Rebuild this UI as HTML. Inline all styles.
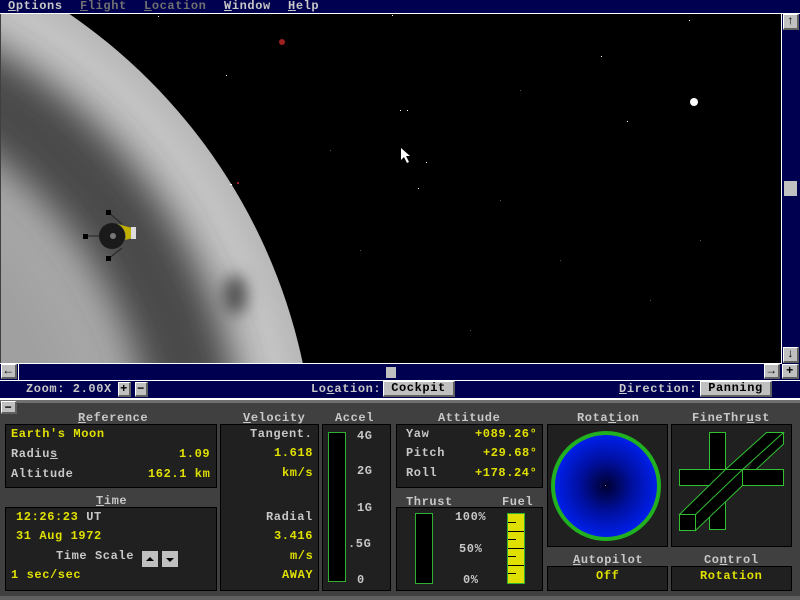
<!DOCTYPE html>
<html><head><meta charset="utf-8"><style>
*{margin:0;padding:0;box-sizing:border-box}
html,body{width:800px;height:600px;overflow:hidden}
body{background:#404040;position:relative;font-family:"Liberation Mono",monospace;font-weight:bold;font-size:12px;letter-spacing:0.6px}
.a{position:absolute;white-space:nowrap;line-height:12px}
.nv{background:#000050}
.box{position:absolute;background:#202020;border:1px solid #000}
.y{color:#e0e000}.g{color:#c8c8c8}
.btn{position:absolute;background:#c0c0c0;border-top:1px solid #fff;border-left:1px solid #fff;border-right:2px solid #606060;border-bottom:2px solid #606060;color:#000;text-align:center;line-height:12px}
u{text-decoration:underline}
</style></head><body>
<div class="a nv" style="left:0;top:0;width:800px;height:13px"></div>
<div class="a g" style="left:8px;top:0"><u>O</u>ptions</div>
<div class="a" style="left:80px;top:0;color:#707070"><u>F</u>light</div>
<div class="a" style="left:144px;top:0;color:#707070"><u>L</u>ocation</div>
<div class="a g" style="left:224px;top:0"><u>W</u>indow</div>
<div class="a g" style="left:288px;top:0"><u>H</u>elp</div>
<div class="a" style="left:0;top:13px;width:800px;height:1px;background:#fff"></div>
<svg class="a" style="left:1px;top:14px" width="780" height="350" viewBox="1 14 780 350">
<defs>
<radialGradient id="m" cx="-250" cy="480" r="565" gradientUnits="userSpaceOnUse">
<stop offset="0.55" stop-color="#a0a0a0"/><stop offset="0.85" stop-color="#b4b4b4"/><stop offset="0.95" stop-color="#c4c4c4"/><stop offset="1" stop-color="#b8b8b8"/></radialGradient>
<filter id="bl" x="-50%" y="-50%" width="200%" height="200%"><feGaussianBlur stdDeviation="18"/></filter>
<filter id="bl2" x="-200%" y="-200%" width="500%" height="500%"><feGaussianBlur stdDeviation="8"/></filter>
<clipPath id="c"><circle cx="-250" cy="480" r="565"/></clipPath>
</defs>
<rect x="1" y="14" width="780" height="350" fill="#000"/>
<circle cx="-250" cy="480" r="565" fill="url(#m)"/>
<g clip-path="url(#c)">
<circle cx="-250" cy="480" r="450" fill="none" stroke="#4a4a4a" stroke-width="90" filter="url(#bl)"/>
<ellipse cx="235" cy="295" rx="12" ry="20" fill="#505050" filter="url(#bl2)"/>
</g>
<g fill="#fff"><circle cx="694" cy="102" r="4"/><rect x="226" y="75" width="1" height="1"/><rect x="400" y="110" width="1" height="1"/><rect x="601" y="56" width="1" height="1"/><rect x="689" y="20" width="1" height="1"/><rect x="407" y="110" width="1" height="1"/><rect x="627" y="121" width="1" height="1"/><rect x="426" y="162" width="1" height="1"/><rect x="418" y="188" width="1" height="1"/><rect x="230" y="184" width="2" height="1"/><rect x="158" y="16" width="1" height="1"/><rect x="392" y="15" width="1" height="1"/></g>
<g fill="#555"><rect x="500" y="200" width="1" height="1"/><rect x="560" y="260" width="1" height="1"/><rect x="650" y="300" width="1" height="1"/><rect x="470" y="330" width="1" height="1"/><rect x="700" y="240" width="1" height="1"/><rect x="330" y="150" width="1" height="1"/><rect x="360" y="250" width="1" height="1"/><rect x="520" y="90" width="1" height="1"/></g>
<circle cx="282" cy="42" r="3" fill="#a02020"/><rect x="237" y="182" width="2" height="2" fill="#a02020"/>
<path d="M401 148 L401 160 L404 157 L407 163 L409 162 L406 156 L410 156 Z" fill="#fff"/>
<g stroke="#222" stroke-width="1" fill="none"><path d="M108 212 L122 224 M85 236 L100 236 M108 259 L122 248"/></g>
<circle cx="112" cy="236" r="13" fill="#1a1a1a"/>
<path d="M117 224 A13 13 0 0 1 125 240 L133 238 L132 228 Z" fill="#c0b000"/>
<circle cx="113" cy="236" r="3" fill="#777"/>
<rect x="106" y="210" width="5" height="5" fill="#000"/><rect x="83" y="234" width="5" height="5" fill="#000"/><rect x="106" y="256" width="5" height="5" fill="#000"/>
<rect x="131" y="227" width="5" height="12" fill="#ddd"/>
</svg>
<div class="a" style="left:781px;top:14px;width:1px;height:366px;background:#fff"></div>
<div class="a nv" style="left:782px;top:14px;width:18px;height:350px"></div>
<div class="btn" style="left:783px;top:14px;width:16px;height:16px;font-size:12px">↑</div>
<div class="a" style="left:784px;top:181px;width:13px;height:15px;background:#c0c0c0"></div>
<div class="btn" style="left:783px;top:347px;width:16px;height:16px">↓</div>
<div class="a" style="left:0;top:363px;width:781px;height:1px;background:#fff"></div>
<div class="a nv" style="left:0;top:364px;width:800px;height:16px"></div>
<div class="btn" style="left:1px;top:364px;width:16px;height:15px">←</div>
<div class="a" style="left:18px;top:364px;width:1px;height:16px;background:#fff"></div>
<div class="a" style="left:386px;top:367px;width:10px;height:11px;background:#c0c0c0"></div>
<div class="btn" style="left:764px;top:364px;width:16px;height:15px">→</div>
<div class="btn" style="left:782px;top:364px;width:17px;height:15px">+</div>
<div class="a" style="left:0;top:380px;width:800px;height:1px;background:#fff"></div>
<div class="a nv" style="left:0;top:381px;width:800px;height:17px"></div>
<div class="a g" style="left:26px;top:383px">Zoom: 2.00X</div>
<div class="btn" style="left:118px;top:382px;width:13px;height:15px">+</div>
<div class="btn" style="left:135px;top:382px;width:13px;height:15px">−</div>
<div class="a g" style="left:311px;top:383px">Lo<u>c</u>ation:</div>
<div class="btn" style="left:383px;top:381px;width:72px;height:16px">Cockpit</div>
<div class="a g" style="left:619px;top:383px"><u>D</u>irection:</div>
<div class="btn" style="left:700px;top:381px;width:72px;height:16px">Panning</div>
<div class="a" style="left:0;top:398px;width:800px;height:2px;background:#fff"></div>
<div class="a" style="left:0;top:400px;width:800px;height:3px;background:#707070"></div>
<div class="btn" style="left:1px;top:401px;width:16px;height:13px">−</div>

<div class="a g" style="left:78px;top:412px"><u>R</u>eference</div>
<div class="box" style="left:5px;top:424px;width:212px;height:64px"></div>
<div class="a y" style="left:11px;top:428px">Earth's Moon</div>
<div class="a g" style="left:11px;top:448px">Radiu<u>s</u></div>
<div class="a y" style="left:179px;top:448px">1.09</div>
<div class="a g" style="left:11px;top:468px">Altitude</div>
<div class="a y" style="left:148px;top:468px">162.1 km</div>

<div class="a g" style="left:96px;top:495px"><u>T</u>ime</div>
<div class="box" style="left:5px;top:507px;width:212px;height:84px"></div>
<div class="a y" style="left:16px;top:511px">12:26:23 <span class="g">UT</span></div>
<div class="a y" style="left:16px;top:530px">31 Aug 1972</div>
<div class="a g" style="left:56px;top:550px">Time Scale</div>
<div class="a" style="left:142px;top:551px;width:16px;height:16px;background:#c0c0c0"></div>
<div class="a" style="left:162px;top:551px;width:16px;height:16px;background:#c0c0c0"></div>
<svg class="a" style="left:142px;top:551px" width="36" height="16"><path d="M4 10 L8 6 L12 10Z M24 7 L32 7 L28 11Z" fill="#000"/></svg>
<div class="a y" style="left:11px;top:569px">1 sec/sec</div>

<div class="a g" style="left:243px;top:412px"><u>V</u>elocity</div>
<div class="box" style="left:220px;top:424px;width:99px;height:167px"></div>
<div class="a g" style="left:250px;top:428px">Tangent.</div>
<div class="a y" style="left:274px;top:447px">1.618</div>
<div class="a y" style="left:282px;top:467px">km/s</div>
<div class="a g" style="left:266px;top:511px">Radial</div>
<div class="a y" style="left:274px;top:530px">3.416</div>
<div class="a y" style="left:290px;top:550px">m/s</div>
<div class="a y" style="left:282px;top:569px">AWAY</div>

<div class="a g" style="left:335px;top:412px">Accel</div>
<div class="box" style="left:322px;top:424px;width:69px;height:167px"></div>
<div class="a" style="left:328px;top:432px;width:18px;height:150px;background:#000;border:1px solid #30b030"></div>
<div class="a g" style="left:357px;top:430px">4G</div>
<div class="a g" style="left:357px;top:465px">2G</div>
<div class="a g" style="left:357px;top:502px">1G</div>
<div class="a g" style="left:348px;top:538px">.5G</div>
<div class="a g" style="left:357px;top:574px">0</div>

<div class="a g" style="left:438px;top:412px">Attitude</div>
<div class="box" style="left:396px;top:424px;width:147px;height:64px"></div>
<div class="a g" style="left:406px;top:428px">Yaw</div>
<div class="a y" style="left:475px;top:428px">+089.26°</div>
<div class="a g" style="left:406px;top:447px">Pitch</div>
<div class="a y" style="left:483px;top:447px">+29.68°</div>
<div class="a g" style="left:406px;top:467px">Roll</div>
<div class="a y" style="left:475px;top:467px">+178.24°</div>

<div class="a g" style="left:406px;top:496px">Thrust</div>
<div class="a g" style="left:502px;top:496px">Fuel</div>
<div class="box" style="left:396px;top:507px;width:147px;height:84px"></div>
<div class="a" style="left:415px;top:513px;width:18px;height:71px;background:#000;border:1px solid #30b030"></div>
<div class="a g" style="left:455px;top:511px">100%</div>
<div class="a g" style="left:459px;top:543px">50%</div>
<div class="a g" style="left:463px;top:574px">0%</div>
<div class="a" style="left:507px;top:513px;width:18px;height:71px;background:#e0e000;border:1px solid #30b030"></div>
<svg class="a" style="left:508px;top:514px" width="16" height="69"><g stroke="#000"><path d="M0 8.5H8M0 17.5H16M0 25.5H8M0 34.5H16M0 42.5H8M0 51.5H16M0 59.5H8"/></g></svg>

<div class="a g" style="left:577px;top:412px">Rota<u>t</u>ion</div>
<div class="box" style="left:547px;top:424px;width:121px;height:123px"></div>
<svg class="a" style="left:548px;top:425px" width="119" height="121"><defs><radialGradient id="b"><stop offset="0" stop-color="#000030"/><stop offset="0.5" stop-color="#0010a0"/><stop offset="1" stop-color="#0020f0"/></radialGradient></defs><circle cx="58" cy="61" r="53" fill="url(#b)" stroke="#20b020" stroke-width="4"/><rect x="57" y="60" width="1" height="1" fill="#888"/></svg>

<div class="a g" style="left:692px;top:412px">FineThr<u>u</u>st</div>
<div class="box" style="left:671px;top:424px;width:121px;height:123px"></div>
<svg class="a" style="left:672px;top:425px" width="119" height="121"><g stroke="#30c030" fill="#000" stroke-width="1">
<path d="M37.5 44.5 L37.5 7.5 L53.5 7.5 L53.5 44.5 Z"/>
<path d="M53.5 44.5 L94.5 7.5 L111.5 7.5 L70.5 44.5 M94.5 7.5 L111.5 7.5 L111.5 19 L70.5 57"/>
<rect x="7.5" y="44.5" width="104" height="16"/>
<rect x="37.5" y="60.5" width="16" height="44"/>
<path d="M7.5 89.5 L53.5 44.5 L70.5 44.5 L23.5 89.5 Z M23.5 89.5 L23.5 105.5 L70.5 60.5 L70.5 44.5"/>
<rect x="7.5" y="89.5" width="16" height="16"/>
</g></svg>

<div class="a g" style="left:573px;top:554px"><u>A</u>utopilot</div>
<div class="box" style="left:547px;top:566px;width:121px;height:25px"></div>
<div class="a y" style="left:596px;top:570px">Off</div>
<div class="a g" style="left:704px;top:554px">Co<u>n</u>trol</div>
<div class="box" style="left:671px;top:566px;width:121px;height:25px"></div>
<div class="a y" style="left:700px;top:570px">Rotation</div>
<div class="a" style="left:0;top:596px;width:800px;height:4px;background:#606060"></div>
</body></html>
